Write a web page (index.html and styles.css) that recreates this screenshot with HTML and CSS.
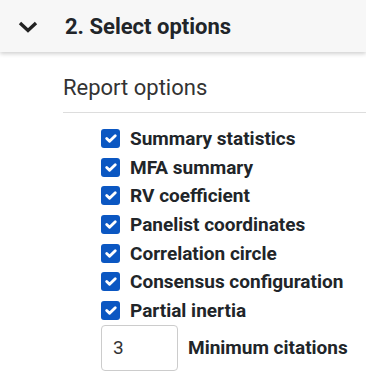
FILE: index.html
```html
<!DOCTYPE html>
<html lang="en">
<head>
  <meta charset="UTF-8">
  <meta name="viewport" content="width=device-width, initial-scale=1.0">
  <title>Select options</title>
  <link rel="stylesheet" href="styles.css">
</head>
<body>
  <div class="step-header">
    <svg class="chevron" width="20" height="12" viewBox="0 0 20 12">
      <path d="M2 2 L10 9.5 L18 2" fill="none" stroke="#222" stroke-width="3.4" stroke-linecap="butt" stroke-linejoin="miter"/>
    </svg>
    <h2>2. Select options</h2>
  </div>

  <div class="step-body">
    <h3 class="section-title">Report options</h3>

    <div class="options">
      <label class="check"><input type="checkbox" checked> Summary statistics</label>
      <label class="check"><input type="checkbox" checked> MFA summary</label>
      <label class="check"><input type="checkbox" checked> RV coefficient</label>
      <label class="check"><input type="checkbox" checked> Panelist coordinates</label>
      <label class="check"><input type="checkbox" checked> Correlation circle</label>
      <label class="check"><input type="checkbox" checked> Consensus configuration</label>
      <label class="check"><input type="checkbox" checked> Partial inertia</label>

      <div class="number-row">
        <input type="text" class="num-input" value="3">
        <label class="num-label">Minimum citations</label>
      </div>
    </div>
  </div>
</body>
</html>
```

FILE: styles.css
```css
body {
  margin: 0;
  font-family: Roboto, "Liberation Sans", sans-serif;
  background: #ffffff;
  color: #212529;
}

.step-header {
  display: flex;
  align-items: center;
  height: 52px;
  padding-left: 18px;
  background: #f7f7f7;
  box-shadow: 0 2px 4px rgba(0, 0, 0, 0.18);
}

.chevron {
  display: block;
  margin-top: 2px;
}

.step-header h2 {
  margin: 0 0 0 27px;
  font-size: 22px;
  font-weight: 700;
  color: #212529;
}

.step-body {
  padding-left: 63px;
}

.section-title {
  margin: 0;
  padding: 23px 0 12px;
  font-size: 22px;
  font-weight: 400;
  color: #333333;
  border-bottom: 1px solid #dddddd;
}

.options {
  padding: 11px 0 0 38px;
}

.check {
  display: flex;
  align-items: center;
  height: 28.7px;
  font-size: 19px;
  font-weight: 700;
  color: #212529;
}

.check input {
  appearance: none;
  width: 19px;
  height: 19px;
  margin: 0 10px 0 0;
  border-radius: 3px;
  background-color: #0b57c2;
  background-image: url("data:image/svg+xml,%3csvg xmlns='http://www.w3.org/2000/svg' viewBox='0 0 20 20'%3e%3cpath fill='none' stroke='%23fff' stroke-linecap='round' stroke-linejoin='round' stroke-width='3' d='M6 10l3 3l6-6'/%3e%3c/svg%3e");
  background-size: 100% 100%;
}

.number-row {
  display: flex;
  align-items: center;
}

.num-input {
  width: 77px;
  height: 46px;
  box-sizing: border-box;
  padding: 0 11px;
  border: 1px solid #cccccc;
  border-radius: 4px;
  font-family: inherit;
  font-size: 19px;
  color: #333333;
}

.num-label {
  margin-left: 10px;
  font-size: 19px;
  font-weight: 700;
}
```
